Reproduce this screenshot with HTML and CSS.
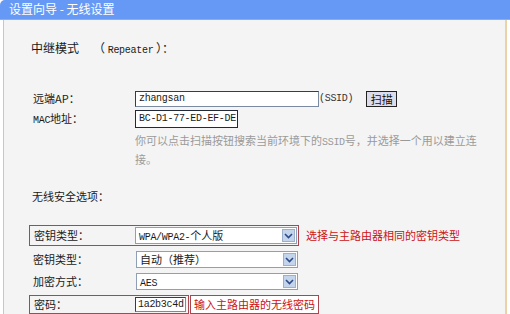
FILE: index.html
```html
<!DOCTYPE html>
<html lang="zh-CN">
<head>
    <meta charset="UTF-8">
    <title>设置向导 - 无线设置</title>
    <link rel="stylesheet" href="styles.css">
</head>
<body>
    <div class="header">设置向导 - 无线设置</div>

    <div class="content">
        <div class="mode">中继模式<span class="mode-name">（ <span class="mono">Repeater</span> ）：</span></div>

        <div class="row row-ap">
            <div class="label">远端AP：</div>
            <div class="field">
                <div class="input input-ssid">zhangsan</div>
                <span class="mono small">(SSID)</span>
                <div class="scan-btn">扫描</div>
            </div>
        </div>

        <div class="row row-mac">
            <div class="label"><span class="mono">MAC</span>地址：</div>
            <div class="field">
                <div class="input input-mac">BC-D1-77-ED-EF-DE</div>
            </div>
        </div>

        <div class="hint">你可以点击扫描按钮搜索当前环境下的<span class="mono">SSID</span>号，并选择一个用以建立连<br>接。</div>

        <div class="section">无线安全选项：</div>

        <div class="sel-row">
            <div class="boxed">
                <div class="label">密钥类型：</div>
                <div class="select"><span class="mono">WPA/WPA2-</span>个人版<span class="arrow"><svg width="9" height="6" viewBox="0 0 9 6"><path d="M1 1l3.5 3.5L8 1" fill="none" stroke="#2b4a8a" stroke-width="1.6"/></svg></span></div>
            </div>
            <div class="note">选择与主路由器相同的密钥类型</div>
        </div>

        <div class="sel-row plain">
            <div class="label">密钥类型：</div>
            <div class="select">自动（推荐）<span class="arrow"><svg width="9" height="6" viewBox="0 0 9 6"><path d="M1 1l3.5 3.5L8 1" fill="none" stroke="#2b4a8a" stroke-width="1.6"/></svg></span></div>
        </div>

        <div class="sel-row plain">
            <div class="label">加密方式：</div>
            <div class="select"><span class="mono">AES</span><span class="arrow"><svg width="9" height="6" viewBox="0 0 9 6"><path d="M1 1l3.5 3.5L8 1" fill="none" stroke="#2b4a8a" stroke-width="1.6"/></svg></span></div>
        </div>

        <div class="sel-row pwd-row">
            <div class="boxed pwd">
                <div class="label">密码：</div>
                <div class="input input-pwd">1a2b3c4d</div>
            </div>
            <div class="note boxed-note">输入主路由器的无线密码</div>
        </div>
    </div>
</body>
</html>
```

FILE: styles.css
```css
body {
    margin: 0;
    background-color: #ffffff;
    font-family: "Noto Sans CJK SC", "DejaVu Sans", sans-serif;
    font-size: 11px;
    line-height: 15px;
    color: #1a1a1a;
    overflow: hidden;
}
.header {
    height: 19px;
    line-height: 18px;
    background-color: #6699f5;
    border-bottom: 1px solid #8aaee8;
    border-top-left-radius: 5px;
    color: #ffffff;
    padding-left: 9px;
    font-size: 12px;
}
.content {
    margin: 0 3px;
    height: 300px;
    background-color: #f4f4f4;
    border-left: 1px solid #e2c396;
    border-right: 2px solid #ecd3a6;
    padding-left: 24px;
    white-space: nowrap;
}
.mono {
    font-family: "Liberation Mono", "Noto Sans CJK SC", monospace;
    font-size: 10px;
    letter-spacing: -0.3px;
}
.small {
    color: #333;
}
.mode {
    padding-top: 20px;
    padding-left: 3px;
    height: 16px;
    line-height: 16px;
    font-size: 12px;
}
.mode-name {
    margin-left: 14px;
}
.row {
    display: flex;
    align-items: center;
}
.label {
    width: 102px;
    padding-left: 5px;
    flex-shrink: 0;
}
.field {
    display: flex;
    align-items: center;
}
.row-ap {
    margin-top: 34px;
    height: 17px;
}
.row-mac {
    margin-top: 3px;
    height: 18px;
}
.input {
    background-color: #ffffff;
    border: 1px solid #7a8aa0;
    border-top-color: #333d50;
    border-left-color: #333d50;
    font-family: "Liberation Mono", monospace;
    font-size: 10px;
    letter-spacing: -0.3px;
    line-height: 14px;
    padding: 0 3px;
    box-sizing: border-box;
}
.input-ssid {
    width: 184px;
    height: 16px;
}
.input-mac {
    width: 103px;
    height: 18px;
    line-height: 16px;
    border-color: #222a3a;
}
.scan-btn {
    margin-left: 13px;
    width: 31px;
    height: 16px;
    box-sizing: border-box;
    border: 1px solid #222;
    background-color: #dcdcec;
    line-height: 14px;
    text-align: center;
    color: #111;
}
.hint {
    margin-left: 107px;
    margin-top: 4px;
    line-height: 17px;
    color: #9a9a9a;
}
.section {
    margin-top: 20px;
    padding-left: 4px;
    line-height: 16px;
}
.sel-row {
    display: flex;
    align-items: center;
    margin-top: 21px;
}
.boxed {
    display: flex;
    align-items: center;
    width: 270px;
    height: 21px;
    box-sizing: border-box;
    border: 1px solid #a8474f;
    margin-left: 1px;
}
.boxed .label {
    width: 101px;
    padding-left: 4px;
}
.select {
    position: relative;
    width: 162px;
    height: 17px;
    box-sizing: border-box;
    background-color: #ffffff;
    border: 1px solid #8f9fb5;
    line-height: 15px;
    padding-left: 3px;
}
.arrow {
    position: absolute;
    right: 1px;
    top: 1px;
    width: 13px;
    height: 13px;
    background-color: #c4d4ea;
    border: 1px solid #9cb0cc;
    box-sizing: border-box;
    display: flex;
    align-items: center;
    justify-content: center;
}
.note {
    color: #cc1111;
    margin-left: 7px;
}
.plain {
    margin-top: 5px;
    height: 17px;
    margin-left: 2px;
}
.plain .label {
    width: 103px;
    padding-left: 3px;
}
.pwd-row {
    margin-top: 5px;
}
.pwd {
    width: 160px;
    height: 19px;
}
.input-pwd {
    width: 51px;
    height: 15px;
    line-height: 13px;
    padding: 0 2px;
}
.boxed-note {
    margin-left: 1px;
    height: 19px;
    line-height: 17px;
    box-sizing: border-box;
    border: 1px solid #a8474f;
    padding: 0 3px;
    background-color: #ffffff;
}
```
